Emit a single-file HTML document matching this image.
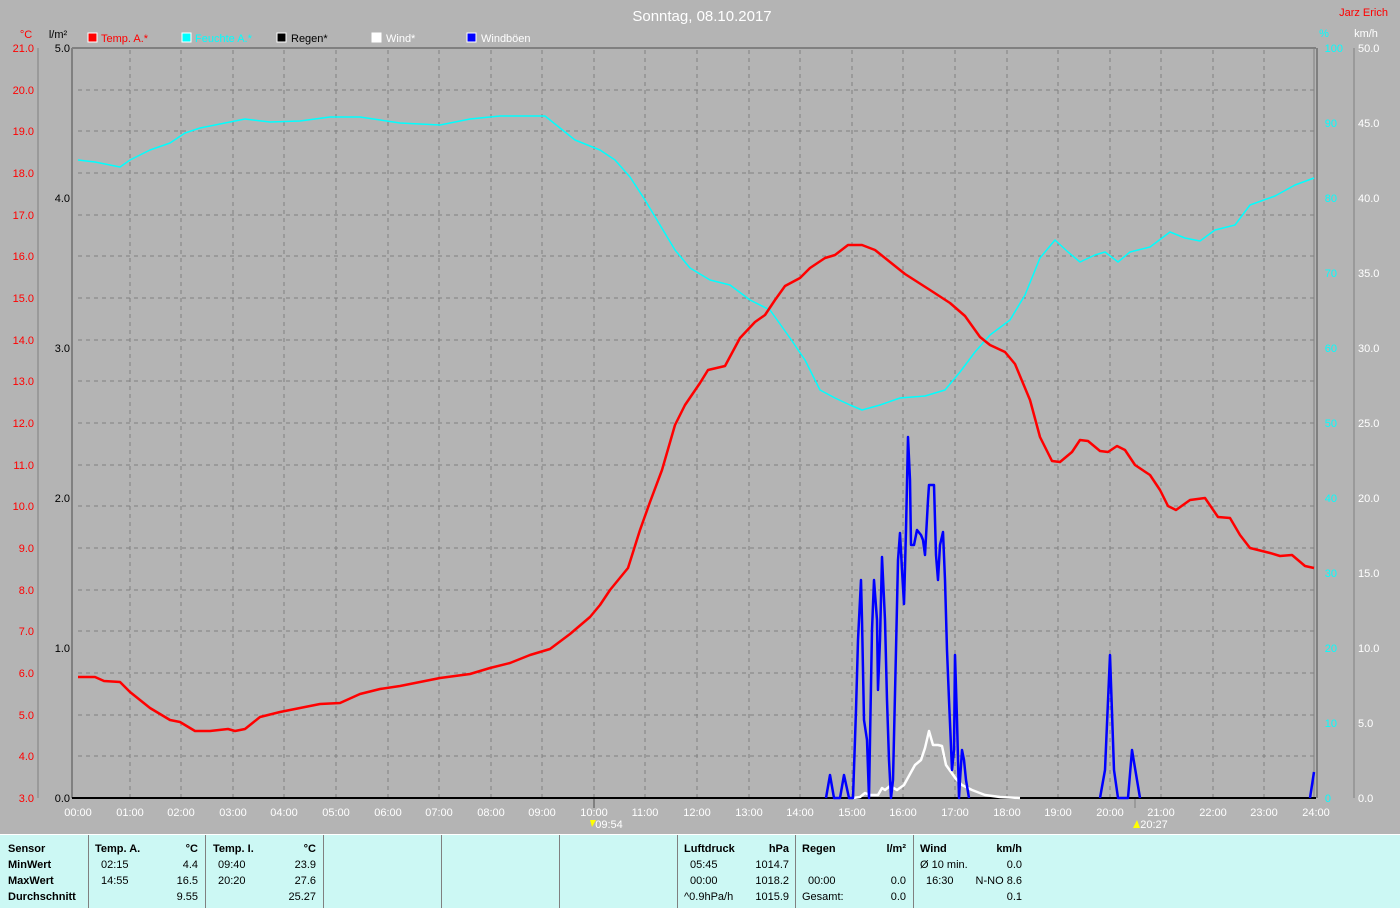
<!DOCTYPE html>
<html><head><meta charset="utf-8"><style>
body{margin:0;background:#b4b4b4;width:1400px;height:907px;overflow:hidden;font-family:"Liberation Sans",sans-serif}
svg{position:absolute;left:0;top:0}
.tb{position:absolute;left:0;top:834px;width:1400px;height:73px;background:#ccf8f4;border-top:1px solid #fff}
.c{position:absolute;top:0;height:73px;border-left:1px solid #808080}
.t{position:absolute;font-size:11px;color:#000;white-space:nowrap}
.b{font-weight:bold}
</style></head><body>
<svg width="1400" height="834" font-family="Liberation Sans, sans-serif" font-size="11">
<text x="702" y="21" fill="#fff" font-size="15" text-anchor="middle">Sonntag, 08.10.2017</text>
<text x="1388" y="16" fill="#f00" text-anchor="end">Jarz Erich</text>
<text x="26" y="38" fill="#f00" text-anchor="middle">°C</text>
<text x="58" y="38" fill="#000" text-anchor="middle">l/m²</text>
<text x="1324" y="37" fill="#0ff" text-anchor="middle">%</text>
<text x="1366" y="37" fill="#fff" text-anchor="middle">km/h</text>
<g>
<rect x="88" y="33" width="9" height="9" fill="#f00" stroke="#fff"/><text x="101" y="42" fill="#f00">Temp. A.*</text>
<rect x="182" y="33" width="9" height="9" fill="#0ff" stroke="#fff"/><text x="195" y="42" fill="#0ff">Feuchte A.*</text>
<rect x="277" y="33" width="9" height="9" fill="#000" stroke="#fff"/><text x="291" y="42" fill="#000">Regen*</text>
<rect x="372" y="33" width="9" height="9" fill="#fff" stroke="#fff"/><text x="386" y="42" fill="#fff">Wind*</text>
<rect x="467" y="33" width="9" height="9" fill="#00f" stroke="#fff"/><text x="481" y="42" fill="#fff">Windböen</text>
</g>
<g stroke="#808080" stroke-dasharray="4,4" stroke-width="1">
<line x1="78" x2="1314" y1="90" y2="90"/><line x1="78" x2="1314" y1="131" y2="131"/><line x1="78" x2="1314" y1="173" y2="173"/><line x1="78" x2="1314" y1="215" y2="215"/><line x1="78" x2="1314" y1="256" y2="256"/><line x1="78" x2="1314" y1="298" y2="298"/><line x1="78" x2="1314" y1="340" y2="340"/><line x1="78" x2="1314" y1="381" y2="381"/><line x1="78" x2="1314" y1="423" y2="423"/><line x1="78" x2="1314" y1="465" y2="465"/><line x1="78" x2="1314" y1="506" y2="506"/><line x1="78" x2="1314" y1="548" y2="548"/><line x1="78" x2="1314" y1="590" y2="590"/><line x1="78" x2="1314" y1="631" y2="631"/><line x1="78" x2="1314" y1="673" y2="673"/><line x1="78" x2="1314" y1="715" y2="715"/><line x1="78" x2="1314" y1="756" y2="756"/>
<line y1="50" y2="798" x1="130" x2="130"/><line y1="50" y2="798" x1="181" x2="181"/><line y1="50" y2="798" x1="233" x2="233"/><line y1="50" y2="798" x1="284" x2="284"/><line y1="50" y2="798" x1="336" x2="336"/><line y1="50" y2="798" x1="388" x2="388"/><line y1="50" y2="798" x1="439" x2="439"/><line y1="50" y2="798" x1="491" x2="491"/><line y1="50" y2="798" x1="542" x2="542"/><line y1="50" y2="798" x1="594" x2="594"/><line y1="50" y2="798" x1="645" x2="645"/><line y1="50" y2="798" x1="697" x2="697"/><line y1="50" y2="798" x1="749" x2="749"/><line y1="50" y2="798" x1="800" x2="800"/><line y1="50" y2="798" x1="852" x2="852"/><line y1="50" y2="798" x1="903" x2="903"/><line y1="50" y2="798" x1="955" x2="955"/><line y1="50" y2="798" x1="1007" x2="1007"/><line y1="50" y2="798" x1="1058" x2="1058"/><line y1="50" y2="798" x1="1110" x2="1110"/><line y1="50" y2="798" x1="1161" x2="1161"/><line y1="50" y2="798" x1="1213" x2="1213"/><line y1="50" y2="798" x1="1264" x2="1264"/>
</g>
<g stroke="#808080" fill="none">
<line x1="72" x2="1316" y1="48" y2="48" stroke-width="2"/>
<line x1="72" x2="72" y1="48" y2="798" stroke-width="2"/>
<line x1="38" x2="38" y1="48" y2="798"/>
<line x1="1314" x2="1314" y1="48" y2="798"/><line x1="1317" x2="1317" y1="48" y2="798" stroke-width="2"/>
<line x1="1354" x2="1354" y1="48" y2="798"/>
<line x1="594" x2="594" y1="798" y2="808" stroke-width="2"/><line x1="1135" x2="1135" y1="798" y2="808"/>
</g>
<g fill="#f00" text-anchor="end">
<text x="34" y="52">21.0</text><text x="34" y="94">20.0</text><text x="34" y="135">19.0</text><text x="34" y="177">18.0</text><text x="34" y="219">17.0</text><text x="34" y="260">16.0</text><text x="34" y="302">15.0</text><text x="34" y="344">14.0</text><text x="34" y="385">13.0</text><text x="34" y="427">12.0</text><text x="34" y="469">11.0</text><text x="34" y="510">10.0</text><text x="34" y="552">9.0</text><text x="34" y="594">8.0</text><text x="34" y="635">7.0</text><text x="34" y="677">6.0</text><text x="34" y="719">5.0</text><text x="34" y="760">4.0</text><text x="34" y="802">3.0</text>
</g>
<g fill="#000" text-anchor="end">
<text x="70" y="52">5.0</text><text x="70" y="202">4.0</text><text x="70" y="352">3.0</text><text x="70" y="502">2.0</text><text x="70" y="652">1.0</text><text x="70" y="802">0.0</text>
</g>
<g fill="#0ff" text-anchor="end">
<text x="1343" y="52">100</text><text x="1337" y="127">90</text><text x="1337" y="202">80</text><text x="1337" y="277">70</text><text x="1337" y="352">60</text><text x="1337" y="427">50</text><text x="1337" y="502">40</text><text x="1337" y="577">30</text><text x="1337" y="652">20</text><text x="1337" y="727">10</text><text x="1331" y="802">0</text>
</g>
<g fill="#fff">
<text x="1358" y="52">50.0</text><text x="1358" y="127">45.0</text><text x="1358" y="202">40.0</text><text x="1358" y="277">35.0</text><text x="1358" y="352">30.0</text><text x="1358" y="427">25.0</text><text x="1358" y="502">20.0</text><text x="1358" y="577">15.0</text><text x="1358" y="652">10.0</text><text x="1358" y="727">5.0</text><text x="1358" y="802">0.0</text>
</g>
<g fill="#fff" text-anchor="middle">
<text x="78" y="816">00:00</text><text x="130" y="816">01:00</text><text x="181" y="816">02:00</text><text x="233" y="816">03:00</text><text x="284" y="816">04:00</text><text x="336" y="816">05:00</text><text x="388" y="816">06:00</text><text x="439" y="816">07:00</text><text x="491" y="816">08:00</text><text x="542" y="816">09:00</text><text x="594" y="816">10:00</text><text x="645" y="816">11:00</text><text x="697" y="816">12:00</text><text x="749" y="816">13:00</text><text x="800" y="816">14:00</text><text x="852" y="816">15:00</text><text x="903" y="816">16:00</text><text x="955" y="816">17:00</text><text x="1007" y="816">18:00</text><text x="1058" y="816">19:00</text><text x="1110" y="816">20:00</text><text x="1161" y="816">21:00</text><text x="1213" y="816">22:00</text><text x="1264" y="816">23:00</text><text x="1316" y="816">24:00</text>
<text x="609" y="828">09:54</text><text x="1154" y="828">20:27</text>
</g>
<polygon points="590,820 596,820 592,827" fill="#ff0"/><polygon points="1133,828 1137,820 1140,828" fill="#ff0"/>
<line x1="72" x2="1316" y1="798" y2="798" stroke="#000" stroke-width="2"/>
<g fill="none" stroke-width="2.5" stroke-linejoin="round">
<polyline stroke="#0ff" stroke-width="1.5" points="78,160 95,162 120,167 130,160 150,150 170,143 185,133 200,128 220,124 245,119 270,122 300,121 330,117 360,117 400,123 440,125 470,119 500,116 545,116 560,128 575,140 600,150 615,160 630,177 645,200 660,225 675,250 690,268 710,280 730,285 750,300 770,310 790,338 805,360 820,390 835,398 850,405 862,410 880,405 900,398 925,396 945,390 960,372 975,352 990,335 1010,320 1025,295 1040,258 1055,240 1068,252 1080,262 1095,255 1105,252 1118,262 1130,252 1150,247 1170,232 1185,238 1200,241 1215,230 1235,225 1250,205 1275,196 1295,185 1314,178"/>
<polyline stroke="#f00" points="78,677 95,677 104,681 120,682 130,692 150,708 170,720 180,722 195,731 210,731 228,729 235,731 245,729 260,717 280,712 300,708 320,704 340,703 360,694 380,689 400,686 420,682 440,678 470,674 490,668 510,663 530,655 550,649 570,634 590,617 600,605 610,590 628,568 640,530 650,502 662,470 675,425 685,405 700,383 708,370 725,366 740,338 755,322 765,315 775,300 785,286 800,278 810,268 825,258 835,255 848,245 862,245 875,250 890,262 905,274 930,290 950,303 965,316 980,337 990,345 1005,352 1015,364 1030,400 1040,437 1052,461 1060,462 1072,452 1080,440 1088,441 1100,451 1108,452 1117,446 1125,450 1135,465 1150,475 1160,490 1168,506 1176,510 1190,500 1205,498 1218,517 1230,518 1240,535 1250,548 1270,553 1280,556 1292,555 1305,566 1314,568"/>
<polyline stroke="#fff" points="853,798 860,797 865,793 870,795 878,795 882,788 885,790 890,786 897,790 904,785 910,774 915,765 921,760 925,748 929,731 933,745 938,745 942,746 946,765 951,772 956,779 962,785 972,790 985,795 1000,797 1020,798"/>
<polyline stroke="#00f" points="826,798 830,775 834,798 840,798 844,775 849,798 853,798 856,710 858,640 861,580 862,620 864,720 867,740 869,798 870,740 872,630 874,580 877,620 878,690 880,640 882,557 885,620 887,700 889,760 891,798 893,780 896,650 898,560 900,533 902,570 904,604 906,530 908,437 910,480 911,545 914,545 917,530 921,535 923,540 925,555 928,500 929,485 934,485 936,555 938,580 940,545 943,532 945,580 947,650 949,700 952,770 954,750 955,655 957,720 959,798 960,780 962,750 964,760 966,780 969,798"/>
<polyline stroke="#00f" points="1100,798 1105,770 1110,655 1114,770 1118,798 1128,798 1132,750 1140,798"/>
<polyline stroke="#00f" points="1310,798 1314,772"/>
</g>
</svg>
<div class="tb">
<div class="c" style="left:88px"></div><div class="c" style="left:205px"></div><div class="c" style="left:323px"></div><div class="c" style="left:441px"></div><div class="c" style="left:559px"></div><div class="c" style="left:677px"></div><div class="c" style="left:795px"></div><div class="c" style="left:913px"></div>
<div class="t b" style="left:8px;top:8px">Sensor</div><div class="t b" style="left:8px;top:24px">MinWert</div><div class="t b" style="left:8px;top:40px">MaxWert</div><div class="t b" style="left:8px;top:56px">Durchschnitt</div>
<div class="t b" style="left:95px;top:8px">Temp. A.</div><div class="t b" style="right:1202px;top:8px">°C</div>
<div class="t" style="left:101px;top:24px">02:15</div><div class="t" style="right:1202px;top:24px">4.4</div>
<div class="t" style="left:101px;top:40px">14:55</div><div class="t" style="right:1202px;top:40px">16.5</div>
<div class="t" style="right:1202px;top:56px">9.55</div>
<div class="t b" style="left:213px;top:8px">Temp. I.</div><div class="t b" style="right:1084px;top:8px">°C</div>
<div class="t" style="left:218px;top:24px">09:40</div><div class="t" style="right:1084px;top:24px">23.9</div>
<div class="t" style="left:218px;top:40px">20:20</div><div class="t" style="right:1084px;top:40px">27.6</div>
<div class="t" style="right:1084px;top:56px">25.27</div>
<div class="t b" style="left:684px;top:8px">Luftdruck</div><div class="t b" style="right:611px;top:8px">hPa</div>
<div class="t" style="left:690px;top:24px">05:45</div><div class="t" style="right:611px;top:24px">1014.7</div>
<div class="t" style="left:690px;top:40px">00:00</div><div class="t" style="right:611px;top:40px">1018.2</div>
<div class="t" style="left:684px;top:56px">^0.9hPa/h</div><div class="t" style="right:611px;top:56px">1015.9</div>
<div class="t b" style="left:802px;top:8px">Regen</div><div class="t b" style="right:494px;top:8px">l/m²</div>
<div class="t" style="left:808px;top:40px">00:00</div><div class="t" style="right:494px;top:40px">0.0</div>
<div class="t" style="left:802px;top:56px">Gesamt:</div><div class="t" style="right:494px;top:56px">0.0</div>
<div class="t b" style="left:920px;top:8px">Wind</div><div class="t b" style="right:378px;top:8px">km/h</div>
<div class="t" style="left:920px;top:24px">Ø 10 min.</div><div class="t" style="right:378px;top:24px">0.0</div>
<div class="t" style="left:926px;top:40px">16:30</div><div class="t" style="right:378px;top:40px">N-NO 8.6</div>
<div class="t" style="right:378px;top:56px">0.1</div>
</div>
</body></html>
